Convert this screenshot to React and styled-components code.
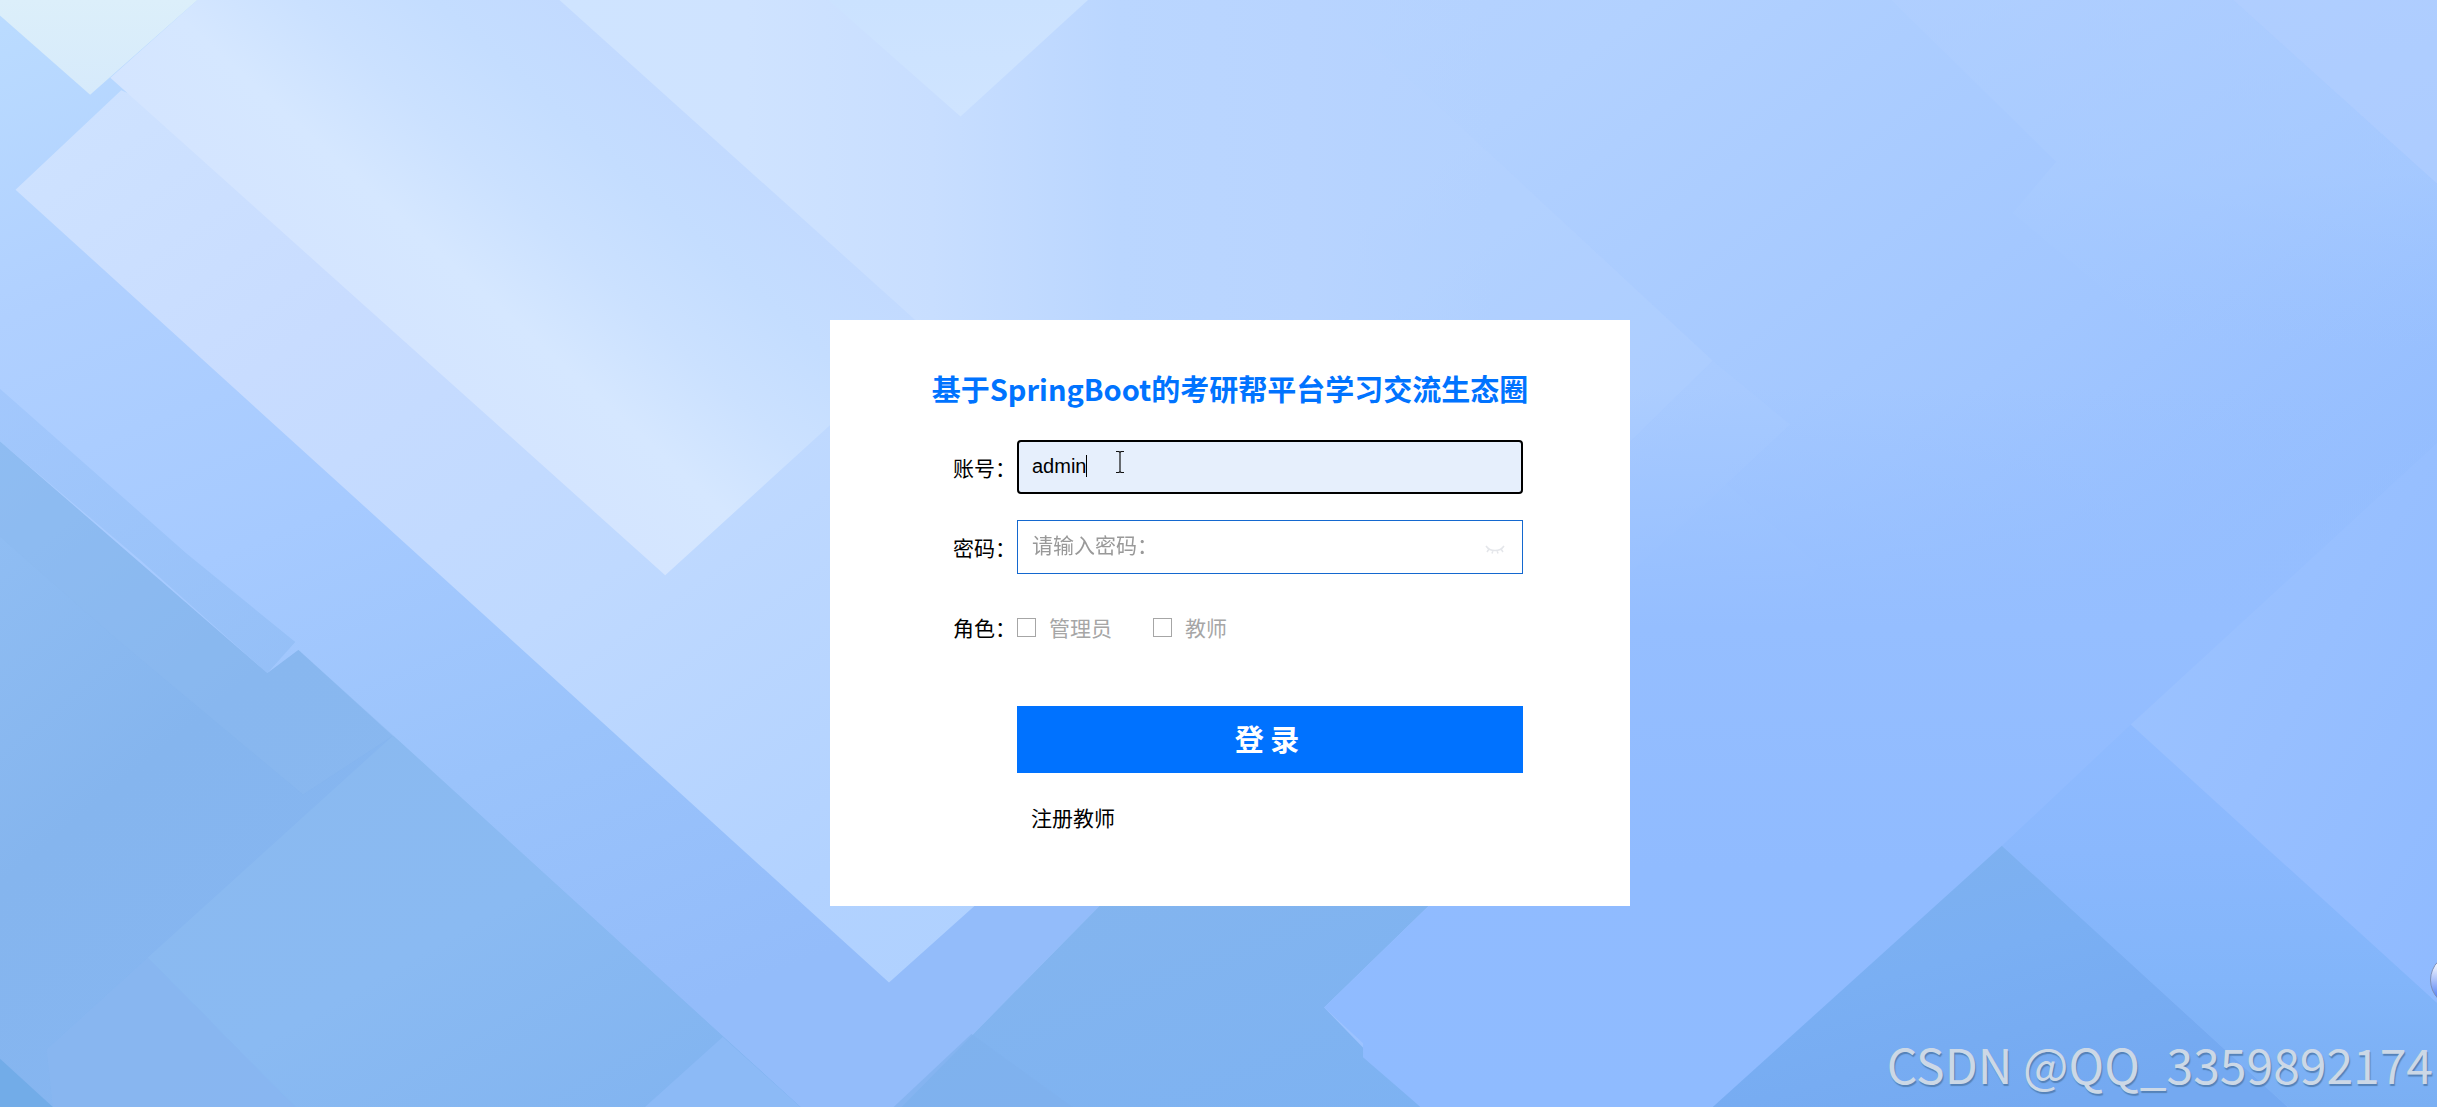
import React, { useState } from "react";
import styled, { createGlobalStyle } from "styled-components";

const GlobalStyle = createGlobalStyle`
  *, *::before, *::after { box-sizing: border-box; }
  body {
    margin: 0;
    background: #a3c6ff;
    font-family: "Noto Sans CJK SC", "Noto Sans", sans-serif;
  }
`;

const Page = styled.main`
  position: relative;
  min-height: 100vh;
  padding: 119px 0 0 23px;
  display: flex;
  align-items: center;
  justify-content: center;
  overflow: hidden;
`;

const Backdrop = styled.svg`
  position: absolute;
  inset: 0;
  width: 100%;
  height: 100%;
`;

const Card = styled.form`
  position: relative;
  width: 800px;
  max-width: 100%;
  padding: 45px 107px 73px 123px;
  background: #fff;
`;

const Title = styled.h1`
  margin: 0 -24px 29px -40px;
  font-size: 29px;
  line-height: 46px;
  font-weight: 700;
  text-align: center;
  color: #0073ff;
`;

const Row = styled.div`
  display: grid;
  grid-template-columns: 64px 1fr;
  align-items: center;
  height: 54px;
  margin-bottom: 26px;
`;

const RowLabel = styled.label`
  font-size: 21px;
  line-height: 32px;
  white-space: nowrap;
  color: #000;
`;

const Field = styled.div`
  position: relative;
  display: flex;
`;

const Input = styled.input`
  width: 100%;
  height: 54px;
  padding: 0 14px 2px;
  border: 1px solid #1468cf;
  border-radius: 0;
  outline: none;
  background: #fff;
  color: #000;
  caret-color: transparent;
  font-family: "Liberation Sans", "Noto Sans CJK SC", sans-serif;
  font-size: 20px;
  &:focus {
    padding: 0 13px 2px;
    border: 2px solid #000;
    border-radius: 4px;
    background: #e6effc;
  }
  &::placeholder {
    color: #999;
    opacity: 1;
    font-family: "Noto Sans CJK SC", sans-serif;
    font-size: 21px;
  }
`;

const Caret = styled.span`
  position: absolute;
  left: 69px;
  top: 15px;
  width: 1px;
  height: 22px;
  background: #000;
  pointer-events: none;
`;

const Reveal = styled.button`
  position: absolute;
  right: 14px;
  top: 14px;
  width: 28px;
  height: 28px;
  padding: 4px;
  border: 0;
  background: none;
`;

const TextPointer = styled.svg`
  position: absolute;
  left: 98px;
  top: 10px;
  width: 10px;
  height: 24px;
  pointer-events: none;
`;

const Roles = styled.div`
  display: flex;
  gap: 41px;
`;

const Role = styled.label`
  display: flex;
  align-items: center;
  gap: 13px;
  font-size: 21px;
  line-height: 32px;
  color: #a6a6a6;
`;

const Check = styled.input`
  appearance: none;
  width: 19px;
  height: 19px;
  margin: 0;
  border: 1px solid #a6a6a6;
  background: #fff;
  &:checked { background: #0073ff; }
`;

const Actions = styled.div`
  display: flex;
  flex-direction: column;
  align-items: flex-start;
  margin: 52px 0 0 64px;
`;

const Submit = styled.button`
  width: 100%;
  height: 67px;
  margin-bottom: 28px;
  padding: 0 6px 4px 0;
  border: 0;
  background: #0072ff;
  color: #fff;
  font-family: inherit;
  font-size: 29px;
  font-weight: 700;
`;

const Register = styled.a`
  padding-left: 14px;
  font-size: 21px;
  line-height: 32px;
  color: #000;
  text-decoration: none;
`;

const Bubble = styled.div`
  position: absolute;
  right: -47px;
  bottom: 100px;
  width: 54px;
  height: 54px;
  border: 1px solid #7d8fb8;
  border-radius: 50%;
  background: linear-gradient(#f4f7ff 20%, #5f8af5 80%);
`;

const Watermark = styled.p`
  position: absolute;
  right: 4px;
  bottom: 9px;
  margin: 0;
  font-family: "Noto Sans CJK SC", sans-serif;
  font-size: 48px;
  line-height: 70px;
  font-weight: 400;
  white-space: nowrap;
  color: #ccd8e6;
  text-shadow: 1px 2px 1px #5582b8;
`;

const gradients = [
  ["sky", 0, 0, 1, 0.6, ["#bcd6ff", "#bcd6ff", "#b2d1ff", "#a1c6ff", "#8eb9fe"]],
  ["corner", 0, 0, 0, 1, ["#dceffa", "#d6eafb"]],
  ["bandA", 0, 0.135, 0.41, -0.17, ["#d4e5ff", "#d5e7ff", "#cbe1ff", "#c4ddff", "#c2daff"]],
  ["bandC", 0, 0, 1, 0, ["#cfe4ff", "#cfe3ff", "#c8deff", "#bad6ff", "#b8d4ff", "#b5d3ff00"]],
  ["peak", 0, 0, 0, 1, ["#cbe2ff", "#cfe4ff"]],
  ["bandE", 0, 0, 1, 1, ["#cfe3ff", "#c8dcff", "#bfd9ff", "#b2d2ff", "#add0ff"]],
  ["left", 0, 0, 0.4, 1, ["#bbdcff", "#b0d0ff", "#a6caff", "#9ac3fb", "#93bcfa"]],
  ["leftMid", 0, 0, 1, 1, ["#9ec5fb", "#8fbcf4"]],
  ["leftLow", 0, 0, 1, 1, ["#92bff4", "#85b5ee", "#86b6f2", "#80b2f2"]],
  ["facet", 0, 0, 1, 1, ["#8ab9ef", "#8abaf2", "#80b3f0"]],
  ["deep", 0, 0, 1, 1, ["#84b5ee", "#7db2f2"]],
  ["rightTop", 0, 0, 0, 1, ["#b2d0ff", "#abcdff", "#a0c6ff00"]],
  ["rightLow", 0, 0, 0, 1, ["#96bfff00", "#95beff", "#90bbff", "#8fbbff"]],
  ["mountain", 0, 0, 0.6, 1, ["#80b2ee", "#7aaff3", "#74a9f1"]],
  ["slope", 0, 0, 0, 1, ["#8fbbff", "#8ab8fd", "#82b5fa", "#7aaff3"]],
  ["facetR", 0, 0, 1, 1, ["#9dc4ff", "#97bfff", "#8fbaff"]],
];

const facets = [
  ["0,0 1568,0 1568,712 0,712", "sky"],
  ["852,0 1102,232 1048,285 900,400 700,205 700,0", "#b8d4ff", 0.35],
  ["1217,0 1323,104 1295,137 1400,225 1568,225 1568,0", "rightTop", 0.5],
  ["1437,0 1568,118 1568,0", "#b2cfff", 0.6],
  ["1102,232 1152,273 1048,370 1048,285", "#b0cfff", 0.25],
  ["1048,370 1110,310 1170,364 1114,458 1048,403", "#a9ccff", 0.25],
  ["0,0 127,0 572,540 711,579 580,712 0,712", "left"],
  ["0,250 120,356 190,413 172,433 90,360 0,284", "leftMid", 0.7],
  ["0,284 172,433 192,418 515,712 0,712", "leftLow"],
  ["0,284 172,433 192,418 253,473 195,511 75,411 0,345", "#8cb9f0", 0.5],
  ["253,473 95,616 190,712 515,712", "facet"],
  ["95,616 30,675 34,712 190,712", "#88b7f0", 0.8],
  ["0,681 34,712 0,712", "#72ace8"],
  ["465,667 415,712 515,712", "#8cbaf6"],
  ["711,579 580,712 914,712 852,648 921,581", "deep"],
  ["625,665 575,712 690,712", "#7fb1ec", 0.7],
  ["921,581 852,648 877,671 877,680 914,712 1110,712 1288,544 1371,466 1568,285 1568,250 921,250", "rightLow"],
  ["1371,466 1288,544 1472,712 1568,712 1568,645", "slope"],
  ["1288,544 1102,712 1472,712", "mountain"],
  ["1371,466 1568,285 1568,645", "facetR"],
  ["10,122 78,58 400,200 840,392 572,632", "bandE"],
  ["71,50 127,0 365,0 620,230 584,228 428,370", "bandA"],
  ["360,0 588,205 600,220 960,220 960,0", "bandC"],
  ["533,0 618,75 700,0", "peak"],
  ["0,0 0,10 58,61 127,0", "corner"],
];

const gradientIds = new Set(gradients.map(([id]) => id));

function Facets() {
  return (
    <Backdrop viewBox="0 0 1568 712" preserveAspectRatio="none" aria-hidden="true">
      <defs>
        {gradients.map(([id, x1, y1, x2, y2, stops]) => (
          <linearGradient key={id} id={id} x1={x1} y1={y1} x2={x2} y2={y2}>
            {stops.map((color, i) => (
              <stop key={i} offset={i / (stops.length - 1)} stopColor={color} />
            ))}
          </linearGradient>
        ))}
      </defs>
      {facets.map(([points, fill, opacity = 1], i) => (
        <polygon
          key={i}
          points={points}
          fill={gradientIds.has(fill) ? `url(#${fill})` : fill}
          opacity={opacity}
        />
      ))}
    </Backdrop>
  );
}

export default function App() {
  const [account, setAccount] = useState("admin");
  const [visible, setVisible] = useState(false);
  return (
    <Page>
      <GlobalStyle />
      <Facets />
      <Card onSubmit={(e) => e.preventDefault()}>
        <Title>基于SpringBoot的考研帮平台学习交流生态圈</Title>
        <Row>
          <RowLabel htmlFor="account">账号：</RowLabel>
          <Field>
            <Input
              id="account"
              value={account}
              onChange={(e) => setAccount(e.target.value)}
              autoFocus
            />
            <Caret aria-hidden="true" />
            <TextPointer viewBox="0 0 10 24" fill="none" stroke="#111" strokeWidth="1.2" aria-hidden="true">
              <path d="M1 1.5h3l1 1 1-1h3M5 2.5v19M1 22.5h3l1-1 1 1h3" />
            </TextPointer>
          </Field>
        </Row>
        <Row>
          <RowLabel htmlFor="password">密码：</RowLabel>
          <Field>
            <Input id="password" type={visible ? "text" : "password"} placeholder="请输入密码：" />
            <Reveal type="button" aria-label="显示密码" onClick={() => setVisible(!visible)}>
              <svg viewBox="0 0 20 20" width="20" height="20" fill="none" stroke="#e4e6ea" strokeWidth="1.5">
                <path d="M1 8c4 6 14 6 18 0M4 11l-2 3M8 12.500l-1 3M12 12.500l1 3M16 11l2 3" />
              </svg>
            </Reveal>
          </Field>
        </Row>
        <Row role="group" aria-labelledby="role">
          <RowLabel as="span" id="role">角色：</RowLabel>
          <Roles>
            <Role><Check type="checkbox" />管理员</Role>
            <Role><Check type="checkbox" />教师</Role>
          </Roles>
        </Row>
        <Actions>
          <Submit type="submit">登 录</Submit>
          <Register href="#register">注册教师</Register>
        </Actions>
      </Card>
      <Bubble />
      <Watermark>CSDN @QQ_3359892174</Watermark>
    </Page>
  );
}
